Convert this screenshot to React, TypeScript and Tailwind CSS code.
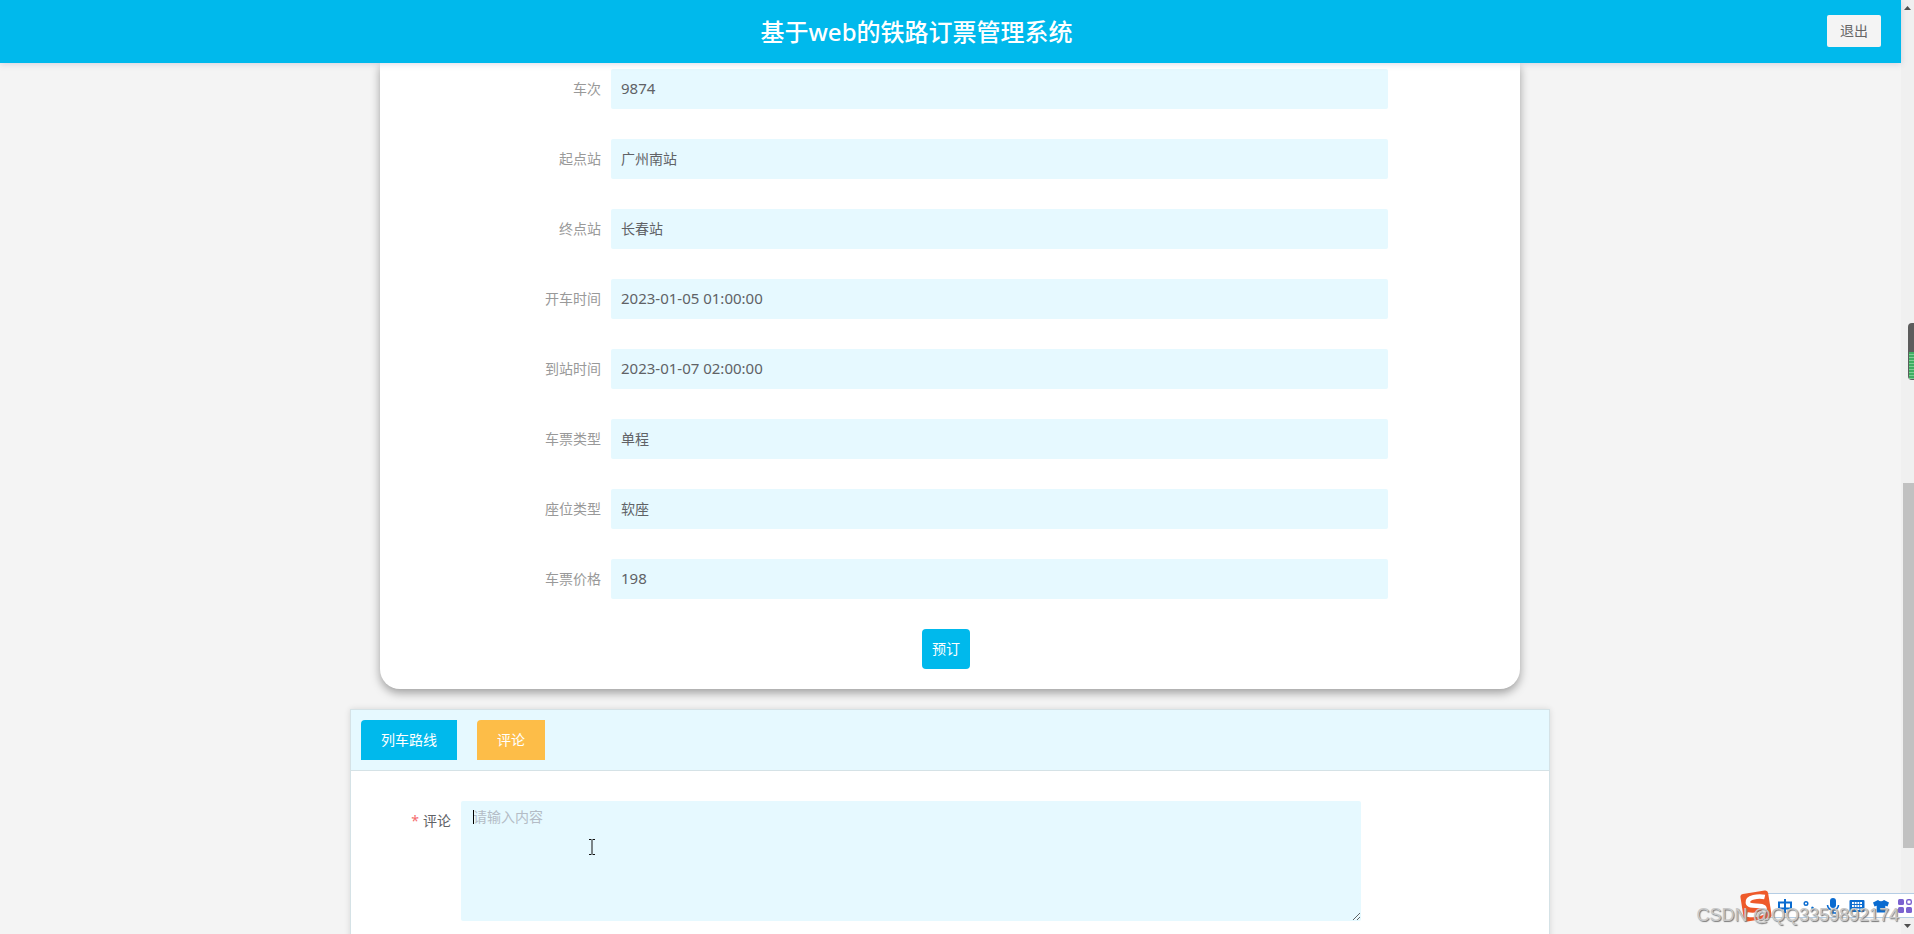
import { useId } from "react";

const fields = [
  { label: "车次", value: "9874" },
  { label: "起点站", value: "广州南站" },
  { label: "终点站", value: "长春站" },
  { label: "开车时间", value: "2023-01-05 01:00:00" },
  { label: "到站时间", value: "2023-01-07 02:00:00" },
  { label: "车票类型", value: "单程" },
  { label: "座位类型", value: "软座" },
  { label: "车票价格", value: "198" },
];

function Header() {
  return (
    <header className="relative z-10 flex h-[63px] shrink-0 items-center justify-center bg-[#00b9ec] pr-[68px] shadow-[0_1px_6px_rgba(120,110,160,0.25)]">
      <h1 className="text-2xl leading-8 font-medium text-white">基于web的铁路订票管理系统</h1>
      <button type="button" className="absolute top-[15px] right-5 h-8 w-[54px] rounded-[2px] bg-[#f4f4f4] text-sm text-[#666]">
        退出
      </button>
    </header>
  );
}

function Field({ label, value }: { label: string; value: string }) {
  const id = useId();
  const size = /^\d/.test(value) ? "text-[15px]" : "text-sm";
  return (
    <div className="flex h-10 items-center">
      <label htmlFor={id} className="w-[221px] shrink-0 pr-2.5 text-right text-sm text-[#999]">
        {label}
      </label>
      <input
        id={id}
        readOnly
        defaultValue={value}
        className={`h-10 min-w-0 flex-1 rounded-[2px] bg-[#e6f9ff] px-2.5 pb-0.5 text-[#606266] outline-none ${size}`}
      />
    </div>
  );
}

function TicketCard() {
  return (
    <section className="mx-auto w-full max-w-[1140px] rounded-b-[20px] bg-white pt-1.5 pr-[132px] pb-5 pl-2.5 shadow-[0_4px_10px_rgba(0,0,0,0.35)]">
      <div className="flex flex-col gap-[30px]">
        {fields.map((f) => (
          <Field key={f.label} label={f.label} value={f.value} />
        ))}
        <div className="flex h-10 justify-center pl-[114px]">
          <button type="button" className="h-10 w-12 rounded bg-[#00b9ec] text-sm text-white">
            预订
          </button>
        </div>
      </div>
    </section>
  );
}

function CommentPanel() {
  return (
    <section className="mx-auto mt-5 w-full max-w-[1200px] border border-[#d5e2e6] bg-white shadow-[0_0_6px_rgba(0,0,0,0.12)]">
      <nav className="flex gap-5 border-b border-[#d5e2e6] bg-[#e6f9ff] p-2.5">
        <button type="button" className="h-10 rounded-tl bg-[#00b9ec] px-5 text-sm text-white">
          列车路线
        </button>
        <button type="button" className="h-10 rounded-tl bg-[#fdbd48] px-5 text-sm text-white">
          评论
        </button>
      </nav>
      <div className="flex pt-[30px] pr-[188px] pb-10">
        <label htmlFor="comment" className="w-[110px] shrink-0 pt-2.5 pr-2.5 text-right text-sm text-[#606266]">
          <span className="mr-1 text-[#f56c6c]">*</span>评论
        </label>
        <textarea
          id="comment"
          placeholder="请输入内容"
          className="block h-[120px] min-w-0 flex-1 resize rounded-[2px] bg-[#e6f9ff] px-3 py-1.5 text-sm text-[#606266] outline-none placeholder:text-[#b4bcc6]"
        />
      </div>
    </section>
  );
}

function ScrollTrack() {
  return (
    <div aria-hidden="true" className="flex w-[13px] shrink-0 flex-col items-center bg-[#f0f0f0]">
      <svg className="mt-1.5 h-1 w-[7px]" viewBox="0 0 7 4">
        <path d="M0 4 3.5 0 7 4z" fill="#505050" />
      </svg>
      <div className="grow-[473]" />
      <div className="w-[11px] grow-[365] self-end bg-[#c1c1c1]" />
      <div className="grow-[76]" />
      <svg className="mb-1.5 h-1 w-[7px]" viewBox="0 0 7 4">
        <path d="M0 0h7L3.5 4z" fill="#505050" />
      </svg>
    </div>
  );
}

function InputToolbar() {
  return (
    <div className="absolute right-0 bottom-4 flex h-[25px] w-[166px] items-center gap-2 border-y border-[#b5cde4] bg-white pl-[29px]">
      <svg className="absolute -top-1 left-[-8px] h-8 w-8" viewBox="0 0 32 32">
        <g transform="rotate(-9 16 16)">
          <rect x="2" y="2" width="28" height="28" rx="3" fill="#ee5a2a" />
          <path d="M26 8.500C20 6 8.500 6 8.500 11.500c0 5.500 15.500 3 15.500 8.500 0 5.500-11 5.500-18 3" fill="none" stroke="#fff" strokeWidth="4.600" />
        </g>
      </svg>
      <svg className="h-4 w-4 shrink-0" viewBox="0 0 16 16" fill="none" stroke="#0a6bd0" strokeWidth="2">
        <path d="M2 4.500h12v6H2zM8 1v14" />
      </svg>
      <svg className="h-4 w-4 shrink-0" viewBox="0 0 16 16">
        <circle cx="5" cy="5.500" r="1.800" fill="none" stroke="#0a6bd0" strokeWidth="1.400" />
        <path d="M11 8.500a2 2 0 0 1 2 2q0 2-2 3l-.5-.8q1-.5.8-1.300a1.600 1.600 0 0 1-.3-2.900z" fill="#0a6bd0" />
      </svg>
      <svg className="h-4 w-4 shrink-0" viewBox="0 0 16 16" fill="none" stroke="#0a6bd0" strokeWidth="1.600">
        <rect x="5" y="0" width="6" height="10" rx="3" fill="#0a6bd0" stroke="none" />
        <path d="M2.500 7a5.500 5 0 0 0 11 0M8 12v3M5 15h6" />
      </svg>
      <svg className="h-4 w-4 shrink-0" viewBox="0 0 16 16">
        <rect x=".5" y="2" width="15" height="12" rx="1" fill="#0a6bd0" />
        <path d="M3 5h10M3 8h10" stroke="#fff" strokeWidth="2" strokeDasharray="1.900 .8" />
        <path d="M3 11.300h2M6 11.300h4.500M11.300 11.300h2" stroke="#fff" strokeWidth="1.600" />
      </svg>
      <svg className="h-4 w-4 shrink-0" viewBox="0 0 16 16">
        <path d="M5 2q3 2.500 6 0l5 2.500-1.500 4-2.200-.8V14.500H3.700V7.700l-2.200.8L0 4.500z" fill="#0a6bd0" />
      </svg>
      <svg className="h-4 w-4 shrink-0" viewBox="0 0 16 16">
        <rect x="1" y="1" width="6" height="6" rx="1.500" fill="#7b62d0" />
        <rect x="9.700" y="1.700" width="4.600" height="4.600" rx="1.500" fill="none" stroke="#7b62d0" strokeWidth="1.400" />
        <rect x="1" y="9" width="6" height="6" rx="1.500" fill="#7b62d0" />
        <rect x="9" y="9" width="6" height="6" rx="1.500" fill="#7b62d0" />
      </svg>
    </div>
  );
}

export default function App() {
  return (
    <div className="relative flex h-screen overflow-hidden bg-[#f4f4f4] font-['Noto_Sans','Noto_Sans_CJK_SC',sans-serif]">
      <div className="flex min-w-0 flex-1 flex-col">
        <Header />
        <main className="min-h-0 flex-1 overflow-hidden pr-px">
          <TicketCard />
          <CommentPanel />
        </main>
      </div>
      <ScrollTrack />

      <div aria-hidden="true" className="absolute top-[323px] right-0 h-[57px] w-1.5 overflow-hidden rounded-l bg-[#5c5c5c] pt-[29px] pl-px">
        <div className="h-[27px] bg-[repeating-linear-gradient(#3fae62_0_2px,#7fce95_2px_3px)]" />
      </div>
      <svg aria-hidden="true" className="absolute top-[839px] left-[588px] h-4 w-2" viewBox="0 0 8 16" fill="none" stroke="#111">
        <path d="M1 .5h2.500M4.500 .5H7M4 1v14M1 15.500h2.500M4.500 15.500H7" />
      </svg>
      <div aria-hidden="true" className="absolute top-[810px] left-[473px] h-3.5 w-px bg-black" />
      <InputToolbar />
      <p className="absolute right-[15px] bottom-[7px] font-['Liberation_Sans',sans-serif] text-lg leading-6 text-[#c8c8c8] [text-shadow:1px_1px_1px_#777]">
        CSDN @QQ3359892174
      </p>
    </div>
  );
}
